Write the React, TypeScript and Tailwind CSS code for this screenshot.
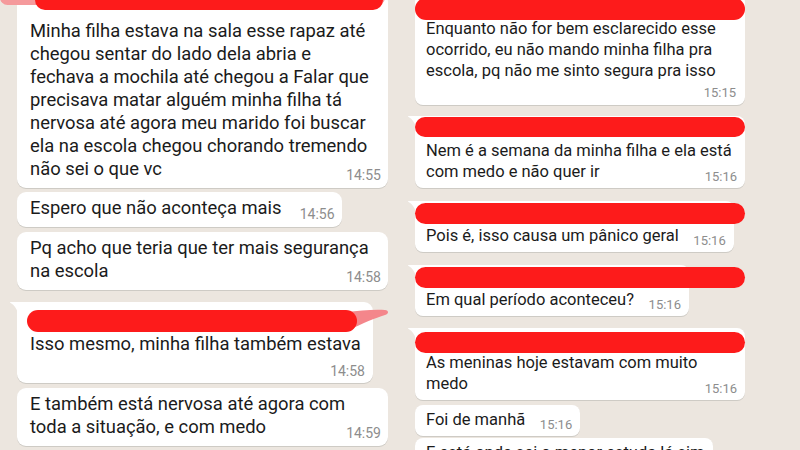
import React from "react";

type BubbleProps = {
  lines: string[];
  time: string;
  side: "l" | "r";
  width?: string;
  gap?: string;
  tail?: boolean;
  name?: string;
  timeBelow?: string;
  overlay?: React.ReactNode;
};

function Tail() {
  return (
    <svg className="absolute -left-[7px] top-0" width="8" height="11" viewBox="0 0 8 11">
      <path d="M0 0H8V11C6.5 6.5 4 3 1 1.3C0.3 0.9 0 0.5 0 0Z" fill="#ffffff" />
    </svg>
  );
}

function Bubble({ lines, time, side, width = "w-fit", gap = "", tail, name, timeBelow, overlay }: BubbleProps) {
  const left = side === "l";
  const box = left
    ? "pl-[13px] pr-[8px] pt-[4px] pb-[8px] text-[18.4px] leading-[23px] rounded-[9px]"
    : "pl-[11px] pr-[9px] pt-[4px] pb-[6px] text-[16.5px] leading-[21px] rounded-[8px]";
  const timeText = left ? "text-[14px] leading-[16px]" : "text-[13px] leading-[14px]";
  const timeAbs = left ? "absolute right-[7px] bottom-[5px]" : "absolute right-[8px] bottom-[4px]";
  const spacer = left ? "w-[52px]" : "w-[46px]";

  return (
    <div
      className={`relative bg-white text-[#1b1b1b] shadow-[0_1px_0.5px_rgba(11,20,26,0.13)] ${box} ${width} ${gap} ${
        tail ? "rounded-tl-none" : ""
      }`}
    >
      {tail && <Tail />}
      {name && <div className={name} />}
      <div className="whitespace-nowrap">
        {lines.map((l, i) => (
          <React.Fragment key={i}>
            {i > 0 && <br />}
            {l}
          </React.Fragment>
        ))}
        {!timeBelow && <span className={`inline-block h-[1px] ${spacer}`} />}
      </div>
      {timeBelow ? (
        <div className={`text-right text-[#8d8d8d] ${timeText} ${timeBelow}`}>{time}</div>
      ) : (
        <div className={`${timeAbs} ${timeText} text-[#8d8d8d]`}>{time}</div>
      )}
      {overlay}
    </div>
  );
}

function Bar({ cls }: { cls: string }) {
  return <div className={`absolute rounded-full bg-[#fd1b1b] ${cls}`} />;
}

export default function App() {
  return (
    <div className="h-[450px] w-[800px] overflow-hidden bg-[#ece6df] font-['Roboto','Noto_Sans',sans-serif]">
      <div className="flex">
        {/* left screenshot */}
        <div className="-mt-[7px] flex w-[400px] shrink-0 flex-col items-start pl-[17px]">
          <Bubble
            side="l"
            width="w-[371px]"
            name="h-[22px]"
            lines={[
              "Minha filha estava na sala esse rapaz até",
              "chegou sentar do lado dela abria e",
              "fechava a mochila até chegou a Falar que",
              "precisava matar alguém minha filha tá",
              "nervosa até agora meu marido foi buscar",
              "ela na escola chegou chorando tremendo",
              "não sei o que vc",
            ]}
            time="14:55"
            overlay={
              <>
                <div className="absolute -left-[17px] -top-[3px] h-[15px] w-[385px] rounded-[8px] bg-[#f59a9c]" />
                <Bar cls="left-[18px] -top-[3px] h-[20px] w-[348px] rounded-[10px]" />
              </>
            }
          />
          <Bubble side="l" gap="mt-[4px]" lines={["Espero que não aconteça mais"]} time="14:56" />
          <Bubble
            side="l"
            width="w-[371px]"
            gap="mt-[5px]"
            lines={["Pq acho que teria que ter mais segurança", "na escola"]}
            time="14:58"
          />
          <Bubble
            side="l"
            width="w-[356px]"
            gap="mt-[12px]"
            tail
            name="h-[26px]"
            lines={["Isso mesmo, minha filha também estava"]}
            time="14:58"
            timeBelow="mt-[8px] -mb-[4px]"
            overlay={
              <>
                <svg className="absolute left-[330px] top-[7px]" width="42" height="22" viewBox="0 0 42 22">
                  <path d="M0 3C12 2 26 0 38 1C42 1.5 42 5 38 6C28 9 16 14 2 21Z" fill="#f4868b" />
                </svg>
                <Bar cls="left-[10px] top-[8px] h-[22px] w-[330px]" />
              </>
            }
          />
          <Bubble
            side="l"
            width="w-[371px]"
            gap="mt-[5px]"
            lines={["E também está nervosa até agora com", "toda a situação, e com medo"]}
            time="14:59"
          />
        </div>

        {/* right screenshot */}
        <div className="-mt-[6px] flex w-[400px] shrink-0 flex-col items-start pl-[15px]">
          <Bubble
            side="r"
            width="w-[330px]"
            name="h-[20px]"
            lines={[
              "Enquanto não for bem esclarecido esse",
              "ocorrido, eu não mando minha filha pra",
              "escola, pq não me sinto segura pra isso",
            ]}
            time="15:15"
            timeBelow="mt-[5px] -mb-[1px]"
            overlay={<Bar cls="left-0 top-[4px] h-[22px] w-[330px]" />}
          />
          <Bubble
            side="r"
            width="w-[330px]"
            gap="mt-[11px]"
            tail
            name="h-[20px]"
            lines={["Nem é a semana da minha filha e ela está", "com medo e não quer ir"]}
            time="15:16"
            overlay={<Bar cls="left-0 top-[1px] h-[20px] w-[330px]" />}
          />
          <Bubble
            side="r"
            gap="mt-[13px]"
            tail
            name="h-[20px]"
            lines={["Pois é, isso causa um pânico geral"]}
            time="15:16"
            overlay={<Bar cls="left-0 top-[2px] h-[21px] w-[330px]" />}
          />
          <Bubble
            side="r"
            gap="mt-[13px]"
            tail
            name="h-[20px]"
            lines={["Em qual período aconteceu?"]}
            time="15:16"
            overlay={<Bar cls="left-0 top-[2px] h-[21px] w-[330px]" />}
          />
          <Bubble
            side="r"
            width="w-[330px]"
            gap="mt-[12px]"
            tail
            name="h-[20px]"
            lines={["As meninas hoje estavam com muito", "medo"]}
            time="15:16"
            overlay={<Bar cls="left-0 top-[4px] h-[21px] w-[330px]" />}
          />
          <Bubble side="r" gap="mt-[5px]" lines={["Foi de manhã"]} time="15:16" />
          <Bubble
            side="r"
            gap="mt-[2px]"
            lines={["E está onde sei o menor estuda lá sim"]}
            time="15:17"
            timeBelow="mt-[5px]"
          />
        </div>
      </div>
    </div>
  );
}
